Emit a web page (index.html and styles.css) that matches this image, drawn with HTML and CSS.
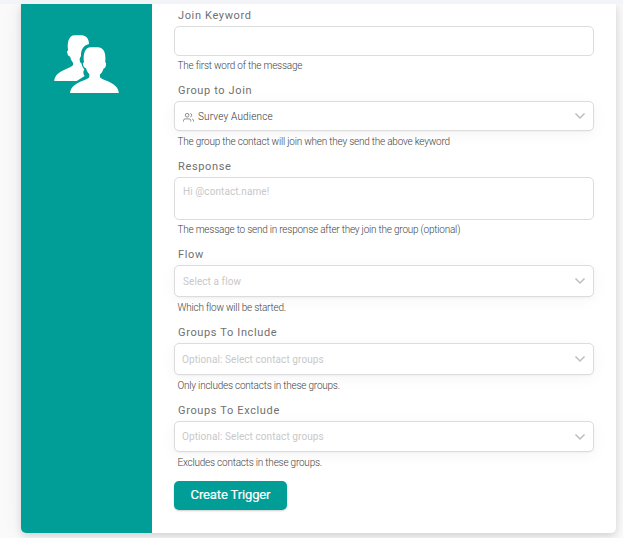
FILE: index.html
```html
<!DOCTYPE html>
<html lang="en">
<head>
<meta charset="utf-8">
<title>Create Trigger</title>
<link rel="stylesheet" href="styles.css">
</head>
<body>
<div class="topbar"></div>
<main class="stage">
  <div class="card">
    <aside class="side">
      <svg class="people" viewBox="27 20 195 175" fill="#fff">
        <path d="M27 159C28 140 45 129 68 120C78 116 84 113 84 109V104C80 99 77 94 75 85C70 85 68 81 67 76C65 71 66 68 69 67C65 42 72 21 88 21H110C124 21 132 32 132 47C115 51 107 65 108 83C102 90 103 101 109 105C111 113 113 118 118 124C115 129 113 134 119 144L95 159Z"/>
        <path d="M75 195C76 176 94 165 115 157C126 153 133 150 133 145V138C128 133 125 128 123 120C118 120 116 116 114 110C113 105 114 103 117 102C113 76 121 57 137 57H158C176 57 184 73 181 102C184 103 184 106 183 112C182 118 180 120 176 121C174 128 171 134 165 139V145C165 150 172 153 183 157C204 165 221 176 222 195Z"/>
      </svg>
    </aside>
    <form class="form">
      <div class="field">
        <label class="label">Join Keyword</label>
        <div class="box"></div>
        <div class="help">The first word of the message</div>
      </div>
      <div class="field select">
        <label class="label">Group to Join</label>
        <div class="box">
          <svg class="group" viewBox="0 0 24 24"><path d="M17 21v-2a4 4 0 0 0-4-4H5a4 4 0 0 0-4 4v2M23 21v-2a4 4 0 0 0-3-3.870M16 3.130a4 4 0 0 1 0 7.750"/><circle cx="9" cy="7" r="4"/></svg>
          <span class="value">Survey Audience</span>
          <svg class="chev" viewBox="0 0 12 8"><path d="M1.500 1.500L6 6L10.500 1.500"/></svg>
        </div>
        <div class="help">The group the contact will join when they send the above keyword</div>
      </div>
      <div class="field">
        <label class="label">Response</label>
        <div class="box area"><span class="hint">Hi @contact.name!</span></div>
        <div class="help">The message to send in response after they join the group (optional)</div>
      </div>
      <div class="field select">
        <label class="label">Flow</label>
        <div class="box tall flow">
          <span class="hint">Select a flow</span>
          <svg class="chev" viewBox="0 0 12 8"><path d="M1.500 1.500L6 6L10.500 1.500"/></svg>
        </div>
        <div class="help">Which flow will be started.</div>
      </div>
      <div class="field select">
        <label class="label">Groups To Include</label>
        <div class="box tall">
          <span class="hint">Optional: Select contact groups</span>
          <svg class="chev" viewBox="0 0 12 8"><path d="M1.500 1.500L6 6L10.500 1.500"/></svg>
        </div>
        <div class="help">Only includes contacts in these groups.</div>
      </div>
      <div class="field select last">
        <label class="label">Groups To Exclude</label>
        <div class="box">
          <span class="hint">Optional: Select contact groups</span>
          <svg class="chev" viewBox="0 0 12 8"><path d="M1.500 1.500L6 6L10.500 1.500"/></svg>
        </div>
        <div class="help">Excludes contacts in these groups.</div>
      </div>
      <button class="submit" type="button">Create Trigger</button>
    </form>
  </div>
</main>
</body>
</html>
```
FILE: styles.css
```css
* { box-sizing: border-box; }
body {
  margin: 0;
  height: 538px;
  overflow: hidden;
  background: #fafafa;
  font-family: Roboto, "Liberation Sans", sans-serif;
}
.topbar { height: 4px; background: #f3f4f7; }
.stage { height: 534px; padding: 0 7px 5px 21px; overflow: hidden; }
.card {
  display: flex;
  height: 529px;
  background: #fff;
  border-radius: 0 0 5px 5px;
  box-shadow: 0 0 22px rgba(0, 0, 0, .07), 0 3px 7px rgba(0, 0, 0, .12);
}
.side {
  width: 131px;
  padding: 31px 0 0 33px;
  background: #019e97;
  border-radius: 0 0 0 5px;
}
.people { display: block; width: 65px; height: 58px; }
.form { width: 464px; padding: 0 22px; }
.field { display: flex; flex-direction: column; margin-bottom: 4px; }
.label {
  height: 22px;
  padding: 1px 0 0 4px;
  color: #707070;
  font-size: 11px;
  line-height: 22px;
  letter-spacing: .64px;
}
.box {
  display: flex;
  align-items: center;
  height: 30px;
  padding: 0 7px;
  background: #fff;
  border: 1px solid #dcdcde;
  border-radius: 5px;
  font-size: 10px;
}
.tall { height: 32px; }
.last .box { height: 31px; }
.area { height: 43px; align-items: flex-start; padding: 8px; line-height: 12px; }
.flow { padding-left: 8px; }
.select .box { box-shadow: 0 3px 16px rgba(0, 0, 0, .045), 0 1px 2px rgba(0, 0, 0, .04); }
.group {
  width: 11px;
  height: 11px;
  margin: 2px 4px 0 1px;
  fill: none;
  stroke: #777;
  stroke-width: 1.8;
}
.value { color: #333; font-weight: 300; letter-spacing: .16px; }
.hint { color: #c8c8c8; letter-spacing: .08px; }
.chev { width: 12px; height: 8px; margin-left: auto; fill: none; stroke: #bdbdbd; stroke-width: 1.5; }
.help {
  height: 19px;
  padding-left: 3.500px;
  color: #444;
  font-size: 10px;
  font-weight: 300;
  line-height: 19px;
  letter-spacing: -.22px;
  white-space: nowrap;
}
.select .help { height: 20px; padding-top: 1px; }
.last { margin-bottom: 9px; }
.last .help { height: 20px; }
.submit {
  display: block;
  width: 113px;
  height: 29px;
  padding: 0 0 2px;
  border: 0;
  border-radius: 5px;
  background: #019e97;
  box-shadow: 0 1px 2px rgba(0, 0, 0, .2);
  color: #fff;
  font: 400 13px Roboto, sans-serif;
  letter-spacing: -.13px;
  -webkit-text-stroke: .2px #fff;
}
```
